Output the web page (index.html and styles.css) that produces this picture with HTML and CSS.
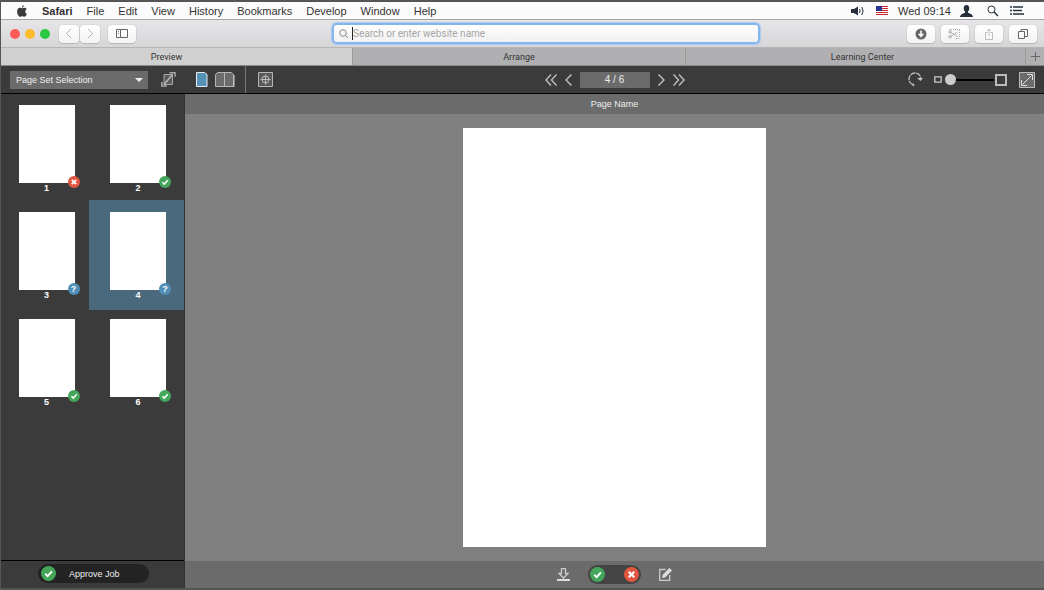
FILE: index.html
```html
<!DOCTYPE html>
<html lang="en">
<head>
    <meta charset="UTF-8">
    <meta name="viewport" content="width=device-width, initial-scale=1.0">
    <title>Page Preview</title>
    <link rel="stylesheet" href="styles.css">
</head>
<body>
    <!-- shared status symbols -->
    <svg class="symbols" width="0" height="0" aria-hidden="true">
        <symbol id="check" viewBox="0 0 14 14"><path d="M4 7.2l2.2 2.2L10.2 5" fill="none" stroke="#fff" stroke-width="1.8"/></symbol>
        <symbol id="cross" viewBox="0 0 14 14"><path d="M4.4 4.4l5.2 5.200M9.600 4.400L4.400 9.600" fill="none" stroke="#fff" stroke-width="2"/></symbol>
    </svg>

    <header class="menubar">
        <svg class="apple" width="10" height="12" viewBox="0 0 10 12"><path fill="#3b3b3b" d="M6.900.2c.1 1.200-.8 2.300-2 2.400C4.800 1.500 5.800.4 6.900.2zM8.300 6.400c0-1.100.6-1.900 1.500-2.400-.6-.8-1.500-1.200-2.400-1.200-.9 0-1.500.5-2.200.5s-1.300-.5-2.100-.5C1.300 2.800.1 4.400.1 6.500c0 2.600 1.600 5.300 2.900 5.300.8 0 1.200-.5 2.200-.5s1.300.5 2.100.5c1.100 0 2.100-1.800 2.500-2.900-1-.4-1.500-1.400-1.500-2.500z"/></svg>
        <nav class="menu">
            <a href="#" class="app-name">Safari</a>
            <a href="#">File</a>
            <a href="#">Edit</a>
            <a href="#">View</a>
            <a href="#">History</a>
            <a href="#">Bookmarks</a>
            <a href="#">Develop</a>
            <a href="#">Window</a>
            <a href="#">Help</a>
        </nav>
        <div class="menu-status">
            <svg width="14" height="10" viewBox="0 0 14 10"><path fill="#25303c" d="M0 3h3l4-2.500v9L3 7H0z"/><path d="M8.500 3q1.200 2 0 4M10.800 1q2.600 4 0 8" fill="none" stroke="#25303c"/></svg>
            <svg class="flag" width="12" height="9" viewBox="0 0 12 9"><path fill="#fff" d="M0 0h12v9H0z"/><path stroke="#c8232f" d="M0 .5h12M0 2.500h12M0 4.500h12M0 6.500h12M0 8.500h12"/><path fill="#27358c" d="M0 0h6v5H0z"/></svg>
            <span class="clock">Wed 09:14</span>
            <svg class="user" width="13" height="12" viewBox="0 0 13 12"><path fill="#25303c" d="M6.500 0C8.500 0 9.300 1.400 9.300 3.200 9.300 5 8.500 6 8 6.600v1.200c1.800.8 4.500 1.200 5 4.200H0c.5-3 3.200-3.400 5-4.200V6.600C4.500 6 3.700 5 3.700 3.200 3.700 1.400 4.500 0 6.500 0z"/></svg>
            <svg class="spot" width="12" height="12" viewBox="0 0 12 12"><circle cx="4.500" cy="4.500" r="3.500" fill="none" stroke="#25303c"/><path d="M7 7l4 4" stroke="#25303c" stroke-width="1.500"/></svg>
            <svg width="14" height="9" viewBox="0 0 14 9"><path stroke="#25303c" stroke-width="1.500" d="M0 1h2M3 1h10M0 4.500h2M3 4.500h9M0 8h2M3 8h11"/></svg>
        </div>
    </header>

    <div class="browser-bar">
        <div class="browser-left">
            <span class="light close"></span>
            <span class="light minimize"></span>
            <span class="light zoom"></span>
            <div class="history-buttons">
                <button type="button" aria-label="Back"><svg width="8" height="11" viewBox="0 0 8 11"><path d="M6 1L1.500 5.500 6 10" fill="none" stroke="#b0b0b0"/></svg></button>
                <button type="button" aria-label="Forward"><svg width="8" height="11" viewBox="0 0 8 11"><path d="M2 1l4.500 4.500L2 10" fill="none" stroke="#b0b0b0"/></svg></button>
            </div>
            <button type="button" class="wide" aria-label="Show sidebar"><svg width="12" height="9" viewBox="0 0 12 9"><path d="M.5.5h11v8H.5zM4.500.5v8" fill="none" stroke="#666"/><path d="M2 2.500h1M2 4.500h1" stroke="#777"/></svg></button>
        </div>
        <div class="address">
            <svg width="10" height="10" viewBox="0 0 10 10"><circle cx="4" cy="4" r="3.300" fill="none" stroke="#8a8a8a"/><path d="M6.500 6.500L9 9" stroke="#8a8a8a"/></svg>
            <span class="caret"></span>
            <input type="text" aria-label="Address" placeholder="Search or enter website name">
        </div>
        <div class="browser-right">
            <button type="button" class="wide" aria-label="Downloads"><svg width="12" height="12" viewBox="0 0 12 12"><circle cx="6" cy="6" r="5.500" fill="#666"/><path d="M6 2.500v5M3.700 5.800L6 8.300l2.300-2.500" fill="none" stroke="#fff" stroke-width="1.500"/></svg></button>
            <button type="button" class="wide" aria-label="Clip"><svg width="14" height="12" viewBox="0 0 14 12"><path d="M1 1.500h11M11.500 2v8M8 10.500h4" fill="none" stroke="#aaa" stroke-dasharray="1 1"/><path d="M2.500 4l7 4.500M2.500 8.500l7-4.500" stroke="#b0b0b0"/><circle cx="2" cy="4" r="1.300" fill="none" stroke="#b0b0b0"/><circle cx="2" cy="8.800" r="1.300" fill="none" stroke="#b0b0b0"/></svg></button>
            <button type="button" class="wide" aria-label="Share"><svg width="10" height="12" viewBox="0 0 10 12"><path d="M3.500 4.500h-2v7h7v-7h-2M5 8V1M3 3l2-2 2 2" fill="none" stroke="#bdbdbd"/></svg></button>
            <button type="button" class="wide" aria-label="Show all tabs"><svg width="10" height="10" viewBox="0 0 10 10"><path d="M.5 2.500h6v7h-6zM3 2.500v-2h6.500v7h-3" fill="none" stroke="#666"/></svg></button>
        </div>
    </div>

    <nav class="tabs">
        <a href="#" class="tab tab-preview active">Preview</a>
        <a href="#" class="tab">Arrange</a>
        <a href="#" class="tab tab-learning">Learning Center</a>
        <button type="button" class="new-tab" aria-label="New tab"><svg width="9" height="9" viewBox="0 0 9 9"><path d="M4.500 0v9M0 4.500h9" stroke="#666"/></svg></button>
    </nav>

    <div class="toolbar">
        <div class="tools-set">
            <select aria-label="Page set">
                <option>Page Set Selection</option>
            </select>
            <button type="button" aria-label="Flip page"><svg width="15" height="15" viewBox="0 0 15 15"><path fill="#5c5c5c" stroke="#aaa" d="M3 2.500h8.500v10H3z"/><path d="M3 12.500l8.500-10" fill="none" stroke="#bbb" stroke-width="1.300"/><path d="M8.500.8H14v4M.8 10v4h5" fill="none" stroke="#aaa" stroke-width="1.500"/></svg></button>
        </div>
        <div class="tools-view">
            <button type="button" aria-label="Single page"><svg width="12" height="15" viewBox="0 0 12 15"><path d="M.5.5h8l2.500 2v12H.5z" fill="#5591b5" stroke="#e4eef4"/></svg></button>
            <button type="button" aria-label="Page spread"><svg width="20" height="15" viewBox="0 0 20 15"><path d="M9.500.5h-7l-2 2v12h9zM9.500.5h7l2 2v12h-9z" fill="#6b6b6b" stroke="#b5b5b5"/><path d="M19 3v12" stroke="#ccc"/></svg></button>
            <span class="divider"></span>
            <button type="button" aria-label="Registration marks"><svg width="15" height="15" viewBox="0 0 15 15"><path fill="#5a5a5a" stroke="#b5b5b5" d="M.5.5h14v14H.5z"/><circle cx="7.500" cy="7.500" r="3.500" fill="none" stroke="#bbb"/><path d="M7.500 2.500v10M2.500 7.500h10" stroke="#bbb"/></svg></button>
        </div>
        <div class="pager">
            <button type="button" aria-label="First page"><svg width="12" height="12" viewBox="0 0 12 12"><path d="M6 .5L1 6l5 5.500M11.500.5l-5 5.500 5 5.500" fill="none" stroke="#bbb" stroke-width="1.500"/></svg></button>
            <button type="button" aria-label="Previous page"><svg width="7" height="12" viewBox="0 0 7 12"><path d="M6.500.5L1 6l5.500 5.500" fill="none" stroke="#bbb" stroke-width="1.500"/></svg></button>
            <input type="text" aria-label="Page number" value="4 / 6">
            <button type="button" aria-label="Next page"><svg width="7" height="12" viewBox="0 0 7 12"><path d="M.5.5L6 6 .5 11.500" fill="none" stroke="#bbb" stroke-width="1.500"/></svg></button>
            <button type="button" aria-label="Last page"><svg width="12" height="12" viewBox="0 0 12 12"><path d="M.5.5l5 5.500-5 5.500M6 .5L11 6l-5 5.500" fill="none" stroke="#bbb" stroke-width="1.500"/></svg></button>
        </div>
        <div class="tools-zoom">
            <button type="button" aria-label="Rotate"><svg width="16" height="15" viewBox="0 0 16 15"><path d="M4.500 12.500C2.200 11.500 1 9.500 1 7c0-3.300 2.500-6 6-6 3.200 0 5.500 2.200 5.500 5.500" fill="none" stroke="#c4c4c4" stroke-width="1.300" stroke-dasharray="5 .8"/><path d="M9 6h6l-2.500 3zM3 11.500l3.500.5-1 2.800z" fill="#c4c4c4"/></svg></button>
            <svg class="small-page" width="8" height="7" viewBox="0 0 8 7"><path d="M.8.8h6.400v5.400H.8z" fill="none" stroke="#ccc" stroke-width="1.300"/></svg>
            <input type="range" aria-label="Zoom" min="0" max="100" value="0">
            <svg width="12" height="12" viewBox="0 0 12 12"><path d="M1 1h10v10H1z" fill="none" stroke="#bbb" stroke-width="2"/></svg>
            <button type="button" class="expand" aria-label="Full screen"><svg width="16" height="16" viewBox="0 0 16 16"><path d="M.5.5h15v15H.5z" fill="#6b6b6b" stroke="#bbb"/><path d="M3.500 12.500l9-9M8 2.500h5.500V8M2.500 8v5.500H8" fill="none" stroke="#ddd"/></svg></button>
        </div>
    </div>

    <main class="workspace">
        <aside class="sidebar">
            <div class="thumbs">
                <button type="button" class="thumb"><span class="paper"><svg class="badge red"><use href="#cross"/></svg></span>1</button>
                <button type="button" class="thumb"><span class="paper"><svg class="badge green"><use href="#check"/></svg></span>2</button>
                <button type="button" class="thumb"><span class="paper"><span class="badge blue">?</span></span>3</button>
                <button type="button" class="thumb selected"><span class="paper"><span class="badge blue">?</span></span>4</button>
                <button type="button" class="thumb"><span class="paper"><svg class="badge green"><use href="#check"/></svg></span>5</button>
                <button type="button" class="thumb"><span class="paper"><svg class="badge green"><use href="#check"/></svg></span>6</button>
            </div>
            <div class="sidebar-footer">
                <button type="button" class="approve"><svg class="mark green"><use href="#check"/></svg>Approve Job</button>
            </div>
        </aside>
        <section class="preview">
            <h1 class="page-name">Page Name</h1>
            <div class="canvas">
                <div class="page"></div>
            </div>
            <div class="actions">
                <button type="button" aria-label="Download"><svg width="13" height="13" viewBox="0 0 13 13"><path d="M4.500.5h4v5H11L6.500 10 2 5.500h2.500z" fill="none" stroke="#ccc" stroke-width="1.300"/><path d="M0 12h13" stroke="#ddd" stroke-width="2"/></svg></button>
                <div class="decision">
                    <button type="button" aria-label="Approve page"><svg class="mark green"><use href="#check"/></svg></button>
                    <button type="button" aria-label="Reject page"><svg class="mark red"><use href="#cross"/></svg></button>
                </div>
                <button type="button" aria-label="Edit"><svg width="13" height="13" viewBox="0 0 13 13"><path d="M6.500 1.500H.7v10.800h10V7" fill="none" stroke="#ccc" stroke-width="1.300"/><path d="M3 10l.8-3.300L10.300 0 13 2.500 6.300 9.200z" fill="#ddd"/></svg></button>
            </div>
        </section>
    </main>
</body>
</html>
```
FILE: styles.css
```css
* {
    box-sizing: border-box;
}
body {
    margin: 0;
    min-height: 100vh;
    display: flex;
    flex-direction: column;
    border: solid #555;
    border-width: 2px 0 2px 1px;
    font-family: "Liberation Sans", Arial, sans-serif;
    font-size: 9px;
    color: #eee;
    background: #808080;
}
button {
    display: flex;
    align-items: center;
    justify-content: center;
    padding: 0;
    border: none;
    background: none;
    font: inherit;
    color: inherit;
    cursor: pointer;
}
input, select {
    font: inherit;
    color: inherit;
    border: none;
}
a {
    color: inherit;
    text-decoration: none;
}
svg {
    display: block;
    flex: none;
}
.symbols {
    position: absolute;
}

/* system menu bar */
.menubar {
    display: flex;
    align-items: center;
    height: 18px;
    padding: 0 20px 0 16px;
    background: #fbfbfb;
    border-bottom: 1px solid #a5a5a5;
    color: #333;
    font-size: 11px;
}
.menu {
    display: flex;
    gap: 14px;
    margin-left: 15px;
}
.app-name {
    font-weight: bold;
}
.menu-status {
    display: flex;
    align-items: center;
    margin-left: auto;
}
.flag {
    margin: 0 10px 0 11px;
}
.user {
    margin-left: 9px;
}
.spot {
    margin: 0 11px 0 14px;
}

/* browser toolbar */
.browser-bar {
    display: grid;
    grid-template-columns: 319px 1fr 274px;
    align-items: center;
    height: 27px;
    padding: 0 7px 0 9px;
    background: linear-gradient(#e6e5e7, #d6d5d7);
}
.browser-left, .browser-right {
    display: flex;
    align-items: center;
}
.browser-left {
    gap: 5px;
}
.browser-right {
    justify-content: flex-end;
    gap: 6px;
}
.light {
    width: 10px;
    height: 10px;
    border-radius: 50%;
}
.close {
    background: #fc5b57;
}
.minimize {
    background: #fdbc2e;
}
.zoom {
    background: #28c840;
}
.history-buttons {
    display: flex;
    gap: 1px;
    margin: 0 3px 0 4px;
}
.browser-bar button {
    width: 20px;
    height: 18px;
    border-radius: 4px;
    background: linear-gradient(#fff, #f3f3f3);
    box-shadow: 0 0 1px #999, 0 1px 1px #bbb;
}
.browser-bar .wide {
    width: 28px;
}
.address {
    display: flex;
    align-items: center;
    height: 17px;
    margin: 0 5px;
    padding: 0 5px;
    border-radius: 3px;
    background: linear-gradient(#fff, #f0f0f0);
    box-shadow: 0 0 0 2px #85b5ee, 0 0 1px 3px #a9caf1;
}
.caret {
    width: 1px;
    height: 13px;
    margin-left: 3px;
    background: #222;
}
.address input {
    flex: 1;
    min-width: 0;
    padding: 0;
    background: none;
    outline: none;
    color: #333;
    font-family: Roboto, sans-serif;
    font-size: 10px;
}
.address input::placeholder {
    color: #a5a5a5;
}

/* tabs */
.tabs {
    display: grid;
    grid-template-columns: 352fr 333fr 340fr 18px;
    height: 19px;
    background: #b0b0b2;
    border-top: 1px solid #b5b5b5;
    border-bottom: 1px solid #8a8a8a;
    color: #333;
    font-family: Roboto, sans-serif;
}
.tab {
    display: flex;
    align-items: center;
    justify-content: center;
    border-right: 1px solid #999;
}
.tab-preview {
    padding-right: 20px;
}
.tab-learning {
    padding-left: 14px;
}
.tab.active {
    background: #d0d0d0;
}

/* application toolbar */
.toolbar {
    display: grid;
    grid-template-columns: 184px 1fr auto 1fr;
    align-items: center;
    height: 28px;
    background: #3b3b3b;
    border-bottom: 1px solid #000;
}
.tools-set, .tools-view, .pager, .tools-zoom {
    display: flex;
    align-items: center;
}
.tools-set {
    gap: 13px;
    padding-left: 9px;
}
.tools-set select {
    width: 138px;
    height: 18px;
    padding: 0 6px;
    border-radius: 0;
    appearance: none;
    background: #6b6b6b url("data:image/svg+xml,%3Csvg xmlns='http://www.w3.org/2000/svg' width='8' height='4'%3E%3Cpath d='M0 0h8L4 4z' fill='%23eee'/%3E%3C/svg%3E") no-repeat right 5px center;
}
.tools-view {
    align-self: stretch;
    padding-left: 11px;
}
.tools-view button + button {
    margin-left: 7px;
}
.divider {
    align-self: stretch;
    width: 1px;
    margin: 0 12px 0 10px;
    background: #777;
}
.pager {
    gap: 8px;
}
.pager input {
    width: 70px;
    height: 16px;
    padding: 0;
    background: #6b6b6b;
    text-align: center;
    font-size: 10px;
}
.tools-zoom {
    justify-content: flex-end;
    padding-right: 9px;
}
.small-page {
    margin: 0 3px 0 10px;
}
.tools-zoom input {
    width: 50px;
    height: 12px;
    margin: 0;
    appearance: none;
    background: linear-gradient(#000, #000) no-repeat center / 94% 2px;
}
.tools-zoom input::-webkit-slider-thumb {
    appearance: none;
    width: 11px;
    height: 11px;
    border-radius: 50%;
    background: #ccc;
}
.expand {
    margin-left: 12px;
}

/* workspace */
.workspace {
    flex: 1;
    display: flex;
}
.sidebar {
    display: flex;
    flex-direction: column;
    width: 184px;
    background: #3b3b3b;
    border-right: 1px solid #333;
}
.thumbs {
    flex: 1;
    display: grid;
    grid-template-columns: 88px 95px;
    grid-template-rows: 106px;
    grid-auto-rows: 107px;
}
.thumb {
    flex-direction: column;
    justify-content: flex-end;
    padding: 0 0 6px 3px;
    font-weight: bold;
    line-height: 11px;
    color: #fff;
}
.thumb.selected {
    background: #4b697d;
    box-shadow: 0 3px 0 #4b697d;
}
.paper {
    position: relative;
    width: 56px;
    height: 78px;
    background: #fff;
}
.badge {
    position: absolute;
    right: -5px;
    bottom: -5px;
    width: 12px;
    height: 12px;
    border-radius: 50%;
    line-height: 12px;
    text-align: center;
}
.green {
    background: #43a65a;
}
.red {
    background: #e25641;
}
.blue {
    background: #5090b8;
}
.sidebar-footer {
    height: 28px;
    padding: 3px 0 0 37px;
    border-top: 1px solid #000;
}
.approve {
    justify-content: flex-start;
    gap: 13px;
    width: 111px;
    height: 19px;
    padding-left: 3px;
    border-radius: 10px;
    background: #232323;
}
.mark {
    width: 15px;
    height: 15px;
    border-radius: 50%;
}
.preview {
    flex: 1;
    display: flex;
    flex-direction: column;
}
.page-name {
    margin: 0;
    background: #6b6b6b;
    font-size: 9px;
    font-weight: normal;
    line-height: 20px;
    text-align: center;
}
.canvas {
    flex: 1;
    display: flex;
    justify-content: center;
    padding: 14px;
    background: #808080;
}
.page {
    aspect-ratio: 303 / 419;
    background: #fff;
}
.actions {
    display: flex;
    align-items: center;
    justify-content: center;
    gap: 18px;
    height: 27px;
    background: #6b6b6b;
}
.decision {
    display: flex;
    justify-content: space-between;
    width: 53px;
    padding: 2px;
    border-radius: 10px;
    background: #444;
}
```
